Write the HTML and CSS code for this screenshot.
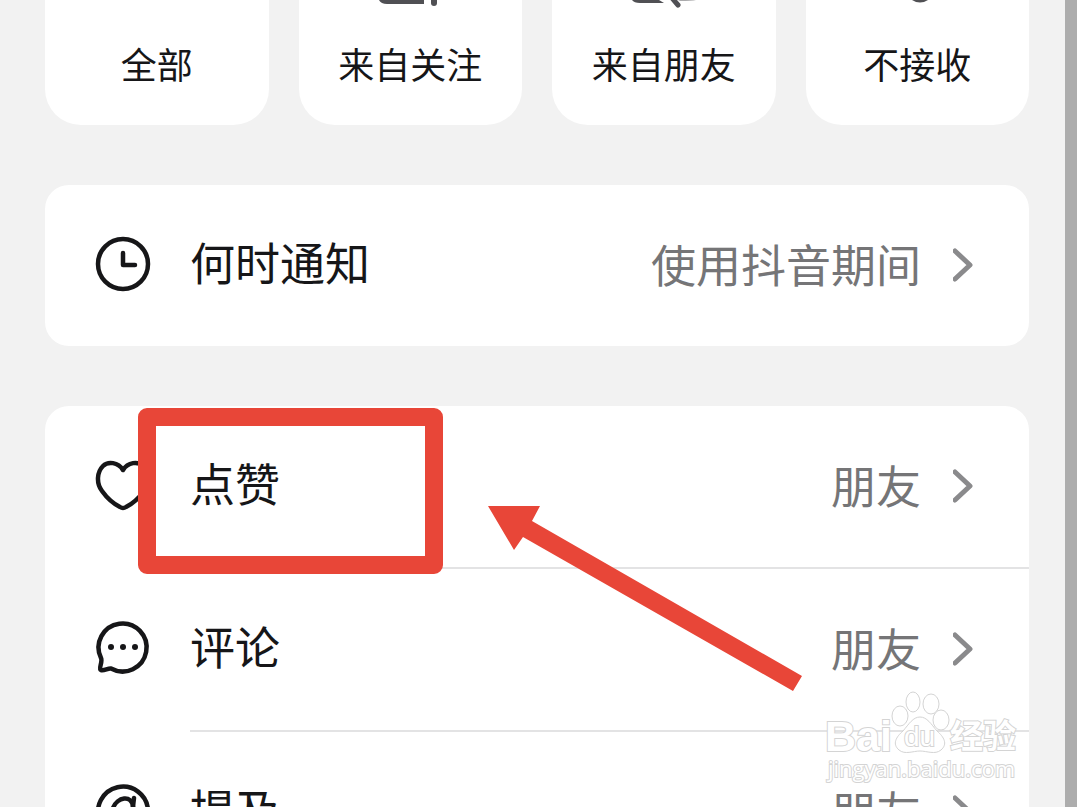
FILE: index.html
```html
<!DOCTYPE html>
<html lang="zh-CN">
<head>
<meta charset="utf-8">
<title>通知设置</title>
<meta name="viewport" content="width=device-width, initial-scale=1">
<link rel="stylesheet" href="styles.css">
</head>
<body>
<main class="screen">
  <div class="choices">
    <button class="choice" type="button">
      <svg class="choice-icon" viewBox="0 0 80 8" aria-hidden="true"></svg>
      <span>全部</span>
    </button>
    <button class="choice" type="button">
      <svg class="choice-icon" viewBox="0 0 80 8" aria-hidden="true"><path d="M9 0H54V4H17Q11 4 9 0Z" fill="#505054"/><path d="M64 -3V3" stroke="#505054" stroke-width="6" stroke-linecap="round"/></svg>
      <span>来自关注</span>
    </button>
    <button class="choice" type="button">
      <svg class="choice-icon" viewBox="0 0 80 8" aria-hidden="true"><path d="M8 0H35L40 3H16Q10 3 8 0Z" fill="#505054"/><path d="M48 -2L54 5" stroke="#505054" stroke-width="5" stroke-linecap="round"/><path d="M54 0H72Q68 1 56 1Z" fill="#aaaaac"/></svg>
      <span>来自朋友</span>
    </button>
    <button class="choice" type="button">
      <svg class="choice-icon" viewBox="0 0 80 8" aria-hidden="true"><path d="M35 0H51Q43 5 35 0Z" fill="#505054"/></svg>
      <span>不接收</span>
    </button>
  </div>

  <section class="card">
    <button class="row" type="button">
      <svg class="icon" viewBox="0 0 54 54" aria-hidden="true"><circle cx="27" cy="26" r="25"/><path d="M27 15V27H39"/></svg>
      <span class="body"><span class="label">何时通知</span><span class="value">使用抖音期间</span><svg class="chevron" viewBox="0 0 20 34" aria-hidden="true"><path d="M2 3L17 17L2 31"/></svg></span>
    </button>
  </section>

  <section class="card">
    <button class="row" type="button">
      <svg class="icon" viewBox="0 0 54 54" aria-hidden="true"><path d="M27 10C22 2 12 1 7 6C1 12 0 23 6 31C11 38 18 44 24 47Q27 49 30 47C36 44 43 38 48 31C54 23 53 12 47 6C42 1 32 2 27 10Z"/></svg>
      <span class="body"><span class="label">点赞</span><span class="value">朋友</span><svg class="chevron" viewBox="0 0 20 34" aria-hidden="true"><path d="M2 3L17 17L2 31"/></svg></span>
    </button>
    <button class="row" type="button">
      <svg class="icon" viewBox="0 0 54 54" aria-hidden="true"><path d="M5 35A24 24 0 1 1 15 45.500C12 45 8 48 5 47C2 46 7 39 5 35Z"/><g class="dots"><circle cx="15" cy="24" r="3"/><circle cx="27" cy="24" r="3"/><circle cx="39" cy="24" r="3"/></g></svg>
      <span class="body"><span class="label">评论</span><span class="value">朋友</span><svg class="chevron" viewBox="0 0 20 34" aria-hidden="true"><path d="M2 3L17 17L2 31"/></svg></span>
    </button>
    <button class="row" type="button">
      <svg class="icon" viewBox="0 0 54 54" aria-hidden="true"><path d="M40 48A25 25 0 1 1 52 25C52 36 39 41 37 33Q36 29 38 13"/><path d="M37 22C36 9 21 12 17 23C13 35 23 41 31 33Q35 29 37 22"/></svg>
      <span class="body"><span class="label">提及</span><span class="value">朋友</span><svg class="chevron" viewBox="0 0 20 34" aria-hidden="true"><path d="M2 3L17 17L2 31"/></svg></span>
    </button>
    <span class="highlight"></span>
    <svg class="arrow" viewBox="0 0 314 187" aria-hidden="true"><path d="M0 0H52L44 15L314 170L305 185L35 31L26 44Z"/></svg>
    <svg class="watermark" viewBox="0 0 200 100" role="img" aria-label="Baidu 经验 jingyan.baidu.com">
      <g class="mark">
        <text class="brand" x="0" y="61">Bai</text>
        <ellipse cx="75" cy="26" rx="8" ry="10"/><ellipse cx="88" cy="12" rx="7" ry="10"/><ellipse cx="106" cy="14" rx="8" ry="10"/><ellipse cx="116" cy="30" rx="8" ry="10"/>
        <path d="M95 27C88 27 84 34 78 41C71 47 67 54 74 60C80 65 88 61 95 61C102 61 110 65 116 60C123 54 119 47 112 41C106 34 102 27 95 27Z"/>
        <text class="du" x="79" y="56">du</text>
        <text class="brand-cn" x="125" y="58">经验</text>
        <text class="site" x="3" y="87">jingyan.baidu.com</text>
      </g>
    </svg>
  </section>
</main>
</body>
</html>
```
FILE: styles.css
```css
* { box-sizing: border-box; }

body {
  margin: 0;
  height: 100vh;
  overflow: hidden;
  background: #f2f2f2;
  border-right: 12px solid #adadad;
  color: #161618;
  font-family: "Noto Sans CJK SC", sans-serif;
}

.screen {
  display: flex;
  flex-direction: column;
  gap: 60px;
  padding: 0 36px 0 45px;
}

button {
  border: 0;
  padding: 0;
  background: none;
  color: inherit;
  font: inherit;
  text-align: left;
}

.choices {
  display: grid;
  grid-template-columns: repeat(4, 1fr);
  gap: 30px;
}

.choice {
  display: flex;
  flex-direction: column;
  align-items: center;
  gap: 29px;
  padding-bottom: 36px;
  border-radius: 0 0 36px 36px;
  background: #fff;
  font-size: 36px;
  line-height: 52px;
}

.choice-icon { width: 80px; height: 8px; }

.card {
  position: relative;
  border-radius: 24px;
  background: #fff;
}

.row {
  display: flex;
  align-items: stretch;
  gap: 40px;
  width: 100%;
  padding-left: 51px;
  font-size: 45px;
  line-height: 66px;
}

.icon {
  flex: none;
  align-self: center;
  width: 54px;
  height: 54px;
  margin-bottom: 2px;
  overflow: visible;
  fill: none;
  stroke: #161618;
  stroke-width: 4.5;
  stroke-linecap: round;
  stroke-linejoin: round;
}

.dots { fill: #161618; stroke: none; }

.body {
  display: flex;
  flex: 1;
  align-items: center;
  padding: 44px 56px 45px 0;
  border-bottom: 2px solid #e3e3e4;
}

.row:last-of-type .body { border-bottom: 0; }
.row:only-of-type .body { padding-bottom: 45px; }

.label {
  flex: 1;
  padding-bottom: 6px;
}

.value {
  padding-bottom: 2px;
  color: #757577;
}

.chevron {
  width: 20px;
  height: 34px;
  margin-left: 32px;
  fill: none;
  stroke: #8a8a8c;
  stroke-width: 5;
  stroke-linecap: round;
  stroke-linejoin: round;
}

.highlight {
  position: absolute;
  top: 2px;
  left: 93px;
  width: 305px;
  height: 166px;
  border: 18px solid #e84638;
  border-radius: 9px;
  pointer-events: none;
}

.arrow {
  position: absolute;
  top: 100px;
  left: 443px;
  width: 314px;
  height: 187px;
  fill: #e84638;
  pointer-events: none;
}

.watermark {
  position: absolute;
  top: 284px;
  right: 4px;
  width: 200px;
  height: 100px;
  overflow: visible;
  pointer-events: none;
}

.mark {
  fill: #fff;
  stroke: #d4d4d4;
  stroke-width: 1;
}

.mark text {
  font-family: "Liberation Sans", "Noto Sans CJK SC", sans-serif;
  stroke-width: 2;
  paint-order: stroke;
}

.mark .brand { font-size: 43px; font-weight: bold; }
.mark .du { font-size: 28px; }
.mark .brand-cn { font-family: "Noto Sans CJK SC", sans-serif; font-size: 33px; font-weight: bold; }
.mark .site { font-family: "Open Sans", sans-serif; font-size: 22px; }
```
